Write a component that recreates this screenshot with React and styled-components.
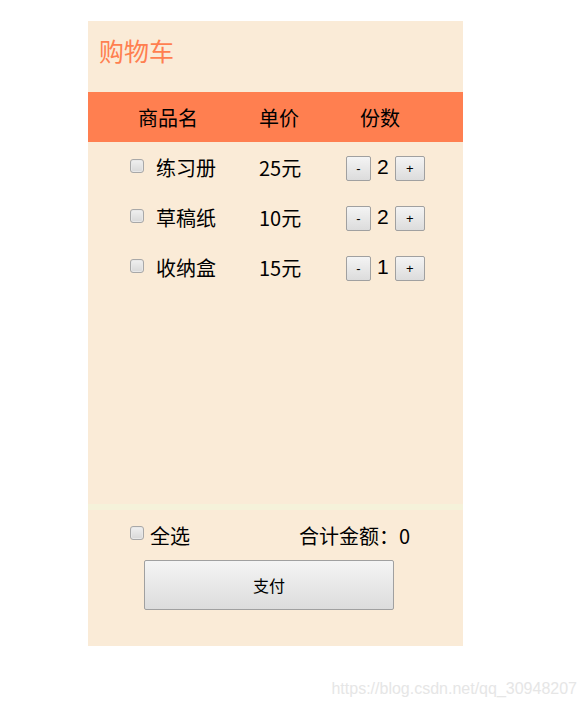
import React, { useState } from "react";
import styled, { createGlobalStyle } from "styled-components";

const Global = createGlobalStyle`
  body { margin: 0; background: #fff; font-family: "Noto Sans CJK SC", "Noto Sans", sans-serif; }
`;

const Page = styled.div`
  position: relative;
  width: 586px;
  height: 708px;
  padding: 21px 0 0 88px;
  box-sizing: border-box;
`;

const Cart = styled.div`
  width: 375px;
  height: 625px;
  background: #faebd7;
  display: flex;
  flex-direction: column;
`;

const Title = styled.h1`
  margin: 0;
  height: 71px;
  padding: 12px 0 0 11px;
  box-sizing: border-box;
  font-size: 25px;
  font-weight: normal;
  line-height: 34px;
  color: #ff7f50;
`;

const HeadBar = styled.div`
  height: 50px;
  background: #ff7f50;
  display: grid;
  grid-template-columns: 121px 101px auto;
  align-items: center;
  padding-left: 50px;
  font-size: 20px;
  color: #000;
`;

const List = styled.div`
  flex: 1;
`;

const Row = styled.div`
  height: 50px;
  display: grid;
  grid-template-columns: 129px 87px auto;
  align-items: center;
  padding-left: 42px;
  font-size: 20px;
  color: #000;
`;

const NameCell = styled.label`
  display: flex;
  align-items: center;
  gap: 12px;
`;

const Box = styled.span`
  width: 12px;
  height: 12px;
  border: 1px solid #a8a8a8;
  border-radius: 3px;
  background: linear-gradient(#f0f0f0, #d8d8d8);
  box-shadow: inset 0 0 0 1px #e8e8e8;
  flex: none;
  margin-top: ${(p) => p.$dy || 0}px;
`;

const Qty = styled.div`
  display: flex;
  align-items: center;
  gap: 6px;
  padding-top: 3px;
`;

const StepBtn = styled.button`
  width: ${(p) => p.$w}px;
  height: 25px;
  padding: 0;
  border: 1px solid #a0a0a0;
  border-radius: 2px;
  background: linear-gradient(#f4f4f4, #dcdcdc);
  font-family: "Liberation Sans", sans-serif;
  font-size: 13px;
  color: #000;
`;

const Count = styled.span`
  font-family: "Liberation Sans", sans-serif;
  font-size: 21px;
  line-height: 20px;
  margin-top: -4px;
`;

const Stripe = styled.div`
  height: 6px;
  background: #f5f2da;
`;

const Footer = styled.div`
  height: 136px;
  display: flex;
  flex-direction: column;
  padding: 12px 0 0 42px;
  box-sizing: border-box;
`;

const FootRow = styled.div`
  display: flex;
  align-items: center;
  height: 26px;
  font-size: 20px;
`;

const AllLabel = styled.label`
  display: flex;
  align-items: center;
  gap: 6px;
  width: 169px;
`;

const Pay = styled.button`
  margin: 12px 0 0 14px;
  width: 250px;
  height: 50px;
  border: 1px solid #a0a0a0;
  border-radius: 2px;
  background: linear-gradient(#f4f4f4, #dcdcdc);
  font-family: "Noto Sans CJK SC", sans-serif;
  font-size: 16px;
  color: #000;
`;

const Watermark = styled.div`
  position: absolute;
  right: 9px;
  bottom: 10px;
  font-family: "Liberation Sans", sans-serif;
  font-size: 16px;
  color: #e6e6e6;
`;

const items = [
  { name: "练习册", price: 25, n: 2 },
  { name: "草稿纸", price: 10, n: 2 },
  { name: "收纳盒", price: 15, n: 1 },
];

export default function App() {
  const [list] = useState(items);
  return (
    <Page>
      <Global />
      <Cart>
        <Title>购物车</Title>
        <HeadBar>
          <span>商品名</span>
          <span>单价</span>
          <span>份数</span>
        </HeadBar>
        <List>
          {list.map((it) => (
            <Row key={it.name}>
              <NameCell>
                <Box $dy={-2} />
                <span>{it.name}</span>
              </NameCell>
              <span>{it.price}元</span>
              <Qty>
                <StepBtn $w={25}>-</StepBtn>
                <Count>{it.n}</Count>
                <StepBtn $w={30}>+</StepBtn>
              </Qty>
            </Row>
          ))}
        </List>
        <Stripe />
        <Footer>
          <FootRow>
            <AllLabel>
              <Box $dy={-4} />
              <span>全选</span>
            </AllLabel>
            <span>合计金额：0</span>
          </FootRow>
          <Pay>支付</Pay>
        </Footer>
      </Cart>
      <Watermark>https://blog.csdn.net/qq_30948207</Watermark>
    </Page>
  );
}
